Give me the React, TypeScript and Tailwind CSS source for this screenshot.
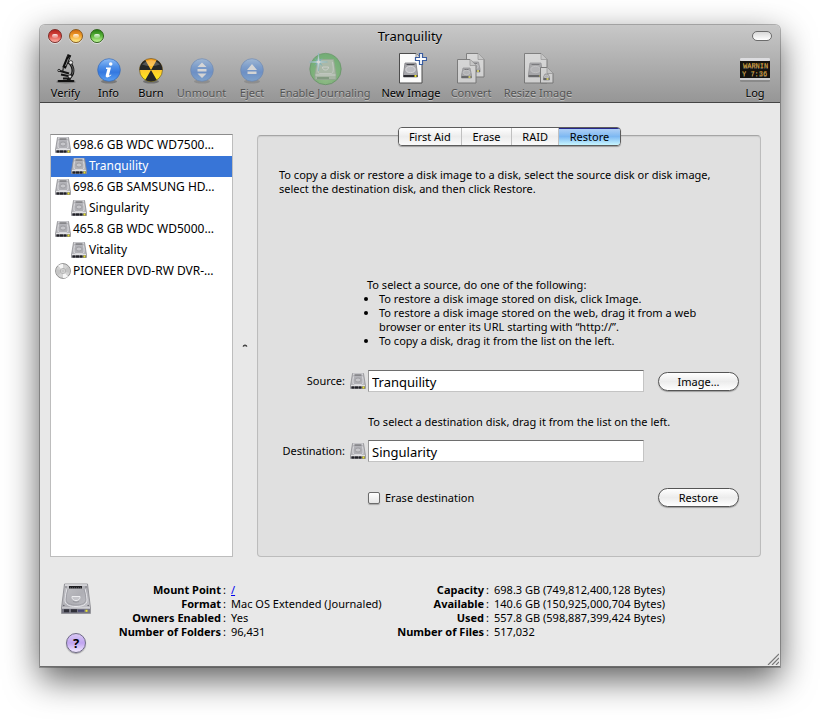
import React from 'react';

interface DiskItem {
  name: string;
  kind: 'disk' | 'volume' | 'optical';
  selected?: boolean;
}

interface InfoItem {
  label: string;
  value: string;
  href?: string;
}

interface ToolItem {
  label: string;
  width: string;
  icon: React.ReactNode;
  disabled?: boolean;
}

const DriveIcon = () => (
  <svg viewBox="0 0 30 32" className="h-8 w-[30px]" aria-hidden="true">
    <defs>
      <linearGradient id="driveTop" x1="0" y1="0" x2="1" y2="1">
        <stop offset="0" stopColor="#c4c4c8" />
        <stop offset="0.5" stopColor="#aeaeb4" />
        <stop offset="1" stopColor="#c9c9ce" />
      </linearGradient>
    </defs>
    <path d="M3.500 1h23L29.500 25v5.500H.5V25z" fill="url(#driveTop)" stroke="#85858b" strokeWidth="0.800" />
    <path d="M4 2h22" stroke="#f4f4f6" strokeWidth="1" />
    <path d="M6 6Q4 13 4 17c0 5 5 6.500 11 6.500S26 22 26 17q0-4-2-11" fill="none" stroke="#e6e6ea" strokeWidth="1" />
    <path d="M7 6Q5 12 5.200 16.500c0 4 4.800 5.500 9.800 5.500s9.800-1.500 9.800-5.500Q25 12 23 6" fill="none" stroke="#96969d" strokeWidth="0.700" />
    <path d="M11 13.500h8c.500 5.500-8.500 5.500-8 0z" fill="#c4c4c9" stroke="#f2f2f4" strokeWidth="0.900" />
    <path d="M12 18.500q3 1.500 6 0" fill="none" stroke="#84848b" strokeWidth="0.600" />
    <rect x="8" y="3" width="13" height="2.500" fill="#1d1d20" />
    <path d="M9 5h11" stroke="#88888e" strokeWidth="0.800" strokeDasharray="1 1" />
    <path d="M1 25.500h28v4.500H1z" fill="#767682" />
    <path d="M1 25h28" stroke="#ececef" strokeWidth="0.800" />
    <path d="M3 27.800h5M10 27.800h6" stroke="#2f2f38" strokeWidth="3" />
    <path d="M17 27.800h6" stroke="#4b4b76" strokeWidth="2" />
    <rect x="24.500" y="26.800" width="2" height="2" fill="#f0e82c" />
    <circle cx="5" cy="4" r="0.700" fill="#66666c" />
    <circle cx="25" cy="4" r="0.700" fill="#66666c" />
    <circle cx="2.800" cy="22.500" r="0.800" fill="#66666c" />
    <circle cx="27.200" cy="22.500" r="0.800" fill="#66666c" />
  </svg>
);

const SmallDriveIcon = ({ className }: { className: string }) => (
  <svg viewBox="0 0 16 16" className={className} aria-hidden="true">
    <path d="M2.500 .5h11l2 12.500v2.500H.5V13z" fill="#b9b9bd" stroke="#8e8e93" strokeWidth="0.800" />
    <path d="M3 1h10" stroke="#ededf0" strokeWidth="1" />
    <path d="M4.500 2h7" stroke="#56565b" strokeWidth="1" />
    <path d="M3.500 3.500Q2 11 4.500 11.500h7Q14 11 12.500 3.500" fill="#b0b0b5" stroke="#dedee1" strokeWidth="0.900" />
    <ellipse cx="8" cy="7" rx="3" ry="2" fill="#c6c6ca" stroke="#96969b" strokeWidth="0.800" />
    <path d="M1 12.500h14" stroke="#e2e2e4" />
    <path d="M1 14.500h14" stroke="#55555d" strokeWidth="2" />
    <path d="M2 14.500h2M5 14.500h3M9 14.500h2" stroke="#212126" strokeWidth="2" />
    <path d="M12.500 14.500h2" stroke="#eee42c" strokeWidth="2" />
  </svg>
);

const DiscIcon = () => (
  <svg viewBox="0 0 16 16" className="size-4 shrink-0" aria-hidden="true">
    <circle cx="8" cy="8" r="7.400" fill="#d3d3d3" stroke="#8f8f8f" />
    <path d="M8 8 3 2.500A7 7 0 0 1 8 1zM8 8l5 5.500A7 7 0 0 1 8 15z" fill="#f6f6f6" />
    <path d="M8 8 1.500 6A7 7 0 0 0 3 12.500zM8 8l6.500 2A7 7 0 0 0 13 3.500z" fill="#c4c4c4" />
    <circle cx="8" cy="8" r="2.600" fill="#e6e6e6" stroke="#a0a0a0" strokeWidth="0.700" />
    <circle cx="8" cy="8" r="1.100" fill="#fff" stroke="#777" strokeWidth="0.500" />
  </svg>
);

const MicroscopeIcon = () => (
  <svg viewBox="0 0 24 32" className="h-8 w-6" aria-hidden="true">
    <ellipse cx="12" cy="29" rx="10" ry="1.500" fill="#000" opacity="0.250" />
    <path d="M4.500 28h15" stroke="#111" strokeWidth="1.800" strokeLinecap="round" />
    <path d="M14 9c5.500 3 6.500 11 2.500 14.500l-2.500 4" fill="none" stroke="#161616" strokeWidth="3" />
    <path d="M15.500 10c4 4 4.500 8 2.500 11.500" fill="none" stroke="#888" strokeWidth="0.700" />
    <path d="m14.500 4-4.500 11" stroke="#0d0d0d" strokeWidth="3.800" />
    <path d="m14.500 5.500-3 7.500" stroke="#999" strokeWidth="0.900" />
    <path d="m13.200 2.200 3.600 1.400" stroke="#111" strokeWidth="2.600" />
    <path d="m9.500 15-1 3.500" stroke="#444" strokeWidth="1.600" />
    <path d="m4.500 17.500 10.500 3" stroke="#151515" strokeWidth="2" />
    <path d="m7 21.500 7 1.500M9 25.500h8" stroke="#151515" strokeWidth="2" />
    <circle cx="16.800" cy="9.500" r="1.900" fill="#ececec" stroke="#222" strokeWidth="0.800" />
    <circle cx="16" cy="23.500" r="1.700" fill="#ddd" stroke="#111" strokeWidth="0.800" />
    <circle cx="5" cy="17.500" r="1.200" fill="#bbb" stroke="#111" strokeWidth="0.800" />
  </svg>
);

const BlueOrb = ({ children }: { children: React.ReactNode }) => (
  <svg viewBox="0 0 24 26" className="mt-1 h-[26px] w-6" aria-hidden="true">
    <defs>
      <linearGradient id="blueOrb" x1="0" y1="0" x2="0" y2="1">
        <stop offset="0" stopColor="#8fbdf6" />
        <stop offset="0.350" stopColor="#4f90e8" />
        <stop offset="0.600" stopColor="#3478e0" />
        <stop offset="1" stopColor="#5ba1f3" />
      </linearGradient>
    </defs>
    <ellipse cx="12" cy="23.500" rx="8" ry="2" fill="#000" opacity="0.250" />
    <circle cx="12" cy="12" r="11.300" fill="url(#blueOrb)" stroke="#3568b4" strokeWidth="0.700" />
    {children}
  </svg>
);

const BurnIcon = () => (
  <svg viewBox="0 0 24 26" className="mt-1 h-[26px] w-6" aria-hidden="true">
    <defs>
      <linearGradient id="burnYellow" x1="0" y1="0" x2="0" y2="1">
        <stop offset="0" stopColor="#f49a19" />
        <stop offset="0.450" stopColor="#ffc32f" />
        <stop offset="1" stopColor="#fff21a" />
      </linearGradient>
    </defs>
    <ellipse cx="12" cy="23.500" rx="8" ry="2" fill="#000" opacity="0.300" />
    <circle cx="12" cy="12" r="11.500" fill="url(#burnYellow)" stroke="#5b4a20" strokeWidth="0.600" />
    <path d="M12 12 6.250 2.040A11.500 11.500 0 0 0 .5 12zM12 12l5.750-9.960A11.500 11.500 0 0 1 23.500 12zM12 12l-5.750 9.960a11.500 11.500 0 0 0 11.500 0z" fill="#262626" />
    <path d="M3 6.500Q12-2 21 6.500 12 9.500 3 6.500" fill="#fff" opacity="0.220" />
  </svg>
);

const JournalIcon = () => (
  <svg viewBox="0 0 34 34" className="size-[34px]" aria-hidden="true">
    <defs>
      <radialGradient id="journalGreen" cx="0.500" cy="0.800" r="0.800">
        <stop offset="0" stopColor="#7ed36b" />
        <stop offset="1" stopColor="#2fa535" />
      </radialGradient>
    </defs>
    <circle cx="17.500" cy="17" r="15.700" fill="url(#journalGreen)" stroke="#2c7f2c" strokeWidth="0.800" />
    <path d="M9.500 7.500h16L28 22v5.500H7V22z" fill="#a9c4a4" stroke="#7fa07b" strokeWidth="0.800" />
    <path d="M10.500 10q-2 11 1 11.500h12q3-.5 1-11.500" fill="none" stroke="#dce8da" strokeWidth="0.900" />
    <path d="M14.500 15h6c.500 4-6.500 4-6 0z" fill="none" stroke="#edf4eb" strokeWidth="0.900" />
    <path d="M7.500 23h20" stroke="#eef5ec" />
    <path d="M9 26h12" stroke="#5f8f5c" strokeWidth="2" />
    <path d="m6 5.500 4.500 3.800L15 5.500 11.700 10l3.300 4.500-4.500-3.800L6 14.500 9.300 10z" fill="#3cb2c6" />
    <path d="m10.500 1 .9 8.100 8.100.9-8.100.9-.9 8.100-.9-8.100-8.100-.9 8.100-.9z" fill="#f2ffff" stroke="#5cbccb" strokeWidth="0.500" />
    <circle cx="10.500" cy="10" r="1.600" fill="#fff" />
  </svg>
);

const Page = ({ x, y, w, h, drive }: { x: number; y: number; w: number; h: number; drive: number }) => (
  <g transform={`translate(${x} ${y})`}>
    <path d={`M.5 .5H${w - 6}L${w} 6.500V${h}H.5z`} fill="#fbfbfb" stroke="#4c4c4c" />
    <path d={`M${w - 6} .5V6.500H${w}`} fill="#dcdcdc" stroke="#777" strokeWidth="0.700" />
    <g transform={`translate(${(w - drive) / 2} ${h / 2 - drive / 2 + 2})`}>
      <path d={`M1.500 0H${drive - 1.5}L${drive} ${drive - 3}V${drive}H0V${drive - 3}z`} fill="#a6a6ab" stroke="#7d7d83" strokeWidth="0.800" />
      <path d={`M3 1.500H${drive - 3}`} stroke="#4a4a50" />
      <ellipse cx={drive / 2} cy={drive / 2 - 0.5} rx={drive / 3} ry={drive / 4.5} fill="#bdbdc2" stroke="#e2e2e4" strokeWidth="0.800" />
      <path d={`M0 ${drive - 1}H${drive}`} stroke="#2c2c31" strokeWidth="2" />
      <path d={`M${drive - 3} ${drive - 1}h2`} stroke="#f1e52c" strokeWidth="2" />
    </g>
  </g>
);

const NewImageIcon = () => (
  <svg viewBox="0 0 32 34" className="h-[34px] w-8" aria-hidden="true">
    <Page x={4} y={1} w={23} h={30} drive={14} />
    <path d="M24.500 1.500h3v4h4v3h-4v4h-3v-4h-4v-3h4z" fill="#fff" stroke="#3a5da0" strokeWidth="1.200" />
  </svg>
);

const ConvertIcon = () => (
  <svg viewBox="0 0 32 34" className="h-[34px] w-8" aria-hidden="true">
    <Page x={11} y={1} w={18} h={24} drive={10} />
    <Page x={2} y={7} w={19} h={24} drive={10} />
  </svg>
);

const ResizeIcon = () => (
  <svg viewBox="0 0 32 34" className="h-[34px] w-8" aria-hidden="true">
    <Page x={2} y={1} w={23} h={30} drive={14} />
    <Page x={18} y={15} w={13} h={16} drive={6} />
  </svg>
);

const LogIcon = () => (
  <svg viewBox="0 0 30 26" className="mt-1 h-[26px] w-[30px]" aria-hidden="true">
    <rect width="30" height="24" rx="1.500" fill="#8a8a8a" />
    <rect width="30" height="3" rx="1" fill="#dcdcdf" />
    <rect y="3" width="30" height="17" fill="#15130f" />
    <rect y="20" width="30" height="2" fill="#cfcfd2" />
    <g fill="#dba02f" fontFamily="Liberation Mono, monospace" fontSize="7">
      <text x="3" y="10">WARNIN</text>
      <text x="2" y="18">Y 7:36</text>
    </g>
  </svg>
);

const tools: ToolItem[] = [
  { label: 'Verify', width: 'w-[43px]', icon: <MicroscopeIcon /> },
  {
    label: 'Info',
    width: 'w-[43px]',
    icon: (
      <BlueOrb>
        <g fill="#fff">
          <circle cx="13.700" cy="6" r="1.800" />
          <path d="M9 9.500h5l-2 7.500q0 1 2-.5l.4.6q-2.600 2.700-4.900 2.200-1.200-.5-.7-2.300l1.600-6H9z" />
        </g>
      </BlueOrb>
    ),
  },
  { label: 'Burn', width: 'w-[42px]', icon: <BurnIcon /> },
  {
    label: 'Unmount',
    width: 'w-[59px]',
    disabled: true,
    icon: (
      <BlueOrb>
        <path d="m12 4.500 4.500 4.500h-9zM7.500 11h9v2.500h-9zM7.500 15.500h9L12 20z" fill="#fff" />
      </BlueOrb>
    ),
  },
  {
    label: 'Eject',
    width: 'w-[42px]',
    disabled: true,
    icon: (
      <BlueOrb>
        <path d="m12 6 5 6H7zM7.500 13.500h9V16h-9z" fill="#fff" />
      </BlueOrb>
    ),
  },
  { label: 'Enable Journaling', width: 'w-[104px]', disabled: true, icon: <JournalIcon /> },
  { label: 'New Image', width: 'w-[68px]', icon: <NewImageIcon /> },
  { label: 'Convert', width: 'w-[52px]', disabled: true, icon: <ConvertIcon /> },
  { label: 'Resize Image', width: 'w-[82px]', disabled: true, icon: <ResizeIcon /> },
];

const disks: DiskItem[] = [
  { name: '698.6 GB WDC WD7500…', kind: 'disk' },
  { name: 'Tranquility', kind: 'volume', selected: true },
  { name: '698.6 GB SAMSUNG HD…', kind: 'disk' },
  { name: 'Singularity', kind: 'volume' },
  { name: '465.8 GB WDC WD5000…', kind: 'disk' },
  { name: 'Vitality', kind: 'volume' },
  { name: 'PIONEER DVD-RW DVR-…', kind: 'optical' },
];

const volumeInfo: InfoItem[] = [
  { label: 'Mount Point', value: '/', href: '#root' },
  { label: 'Format', value: 'Mac OS Extended (Journaled)' },
  { label: 'Owners Enabled', value: 'Yes' },
  { label: 'Number of Folders', value: '96,431' },
];

const usageInfo: InfoItem[] = [
  { label: 'Capacity', value: '698.3 GB (749,812,400,128 Bytes)' },
  { label: 'Available', value: '140.6 GB (150,925,000,704 Bytes)' },
  { label: 'Used', value: '557.8 GB (598,887,399,424 Bytes)' },
  { label: 'Number of Files', value: '517,032' },
];

const tabs = ['First Aid', 'Erase', 'RAID', 'Restore'];

const ToolButton = ({ tool }: { tool: ToolItem }) => (
  <button
    disabled={tool.disabled}
    className={`flex flex-col items-center text-[11px] leading-[14px] whitespace-nowrap [text-shadow:0_1px_0_rgba(255,255,255,0.4)] ${tool.width}`}
  >
    <span className={`flex h-[34px] items-center justify-center ${tool.disabled ? 'opacity-50' : ''}`}>{tool.icon}</span>
    <span className={tool.disabled ? 'text-[#555]' : 'text-black'}>{tool.label}</span>
  </button>
);

const TrafficLight = ({ label, color }: { label: string; color: string }) => (
  <button
    aria-label={label}
    className={`size-[14px] rounded-full border shadow-[0_1px_0_rgba(255,255,255,0.5)] ${color}`}
  >
    <span className="mx-auto -mt-px block h-[4px] w-[6px] rounded-full bg-linear-to-b from-white/90 to-white/20" />
  </button>
);

const PushButton = ({ children }: { children: React.ReactNode }) => (
  <button className="h-[19px] w-[81px] justify-self-end rounded-full border border-[#555] bg-linear-to-b from-white via-[#ececec] to-white text-[11px] leading-[17px] shadow-[0_1px_1px_rgba(0,0,0,0.3)]">
    {children}
  </button>
);

const DiskField = ({ id, label, value }: { id: string; label: string; value: string }) => (
  <>
    <div className="flex items-center justify-end">
      <label htmlFor={id}>{label}</label>
      <SmallDriveIcon className="mr-[2px] ml-[5px] size-4" />
    </div>
    <input
      id={id}
      defaultValue={value}
      className="h-[22px] w-full min-w-0 border border-[#c4c4c4] border-t-[#6e6e6e] border-l-[#9a9a9a] bg-white px-[3px] pt-[2px] text-[13px] leading-[18px] outline-none"
    />
  </>
);

const InfoList = ({ items, className }: { items: InfoItem[]; className: string }) => (
  <dl className={className}>
    {items.map(item => (
      <React.Fragment key={item.label}>
        <dt className="text-right">
          <b className="font-bold">{item.label}</b>
          <span className="ml-[2px]">:</span>
        </dt>
        <dd className="whitespace-nowrap">
          {item.href ? <a href={item.href} className="text-[#0000ee] underline">{item.value}</a> : item.value}
        </dd>
      </React.Fragment>
    ))}
  </dl>
);

const Header = () => (
  <header className="rounded-t-[5px] border-b border-[#444] bg-linear-to-b from-[#c8c8c8] to-[#969696]">
    <div className="grid h-[22px] grid-cols-[1fr_auto_1fr] items-center px-2">
      <div className="flex gap-[7px]">
        <TrafficLight label="Close" color="border-[#7c2a26] bg-linear-to-b from-[#b3221e] via-[#dc4a42] to-[#ffb0a8]" />
        <TrafficLight label="Minimize" color="border-[#8a5a1c] bg-linear-to-b from-[#cf6a10] via-[#f5a52c] to-[#fff08a]" />
        <TrafficLight label="Zoom" color="border-[#2e6419] bg-linear-to-b from-[#277f14] via-[#5cb83c] to-[#c4f99a]" />
      </div>
      <h1 className="text-[13px] leading-[18px] [text-shadow:0_1px_0_rgba(255,255,255,0.4)]">Tranquility</h1>
      <button
        aria-label="Toggle toolbar"
        className="h-[10px] w-5 justify-self-end rounded-full border border-[#6b6b6b] bg-linear-to-b from-[#d8d8d8] to-white"
      />
    </div>
    <div className="flex px-1 pt-[5px] pb-[2px]">
      {tools.map(tool => (
        <ToolButton key={tool.label} tool={tool} />
      ))}
      <div className="ml-auto">
        <ToolButton tool={{ label: 'Log', width: 'w-[42px]', icon: <LogIcon /> }} />
      </div>
    </div>
  </header>
);

const DiskList = () => (
  <ul className="w-[183px] shrink-0 border border-[#bdbdbd] border-t-[#8c8c8c] bg-white">
    {disks.map(disk => (
      <li
        key={disk.name}
        className={`flex h-[21px] items-center gap-[2px] pb-[2px] text-[12px] leading-[16px] whitespace-nowrap ${
          disk.kind === 'volume' ? 'pl-5' : 'pl-1'
        } ${disk.selected ? 'bg-[#3875d7] text-white' : 'text-black'}`}
      >
        {disk.kind === 'optical' ? <DiscIcon /> : <SmallDriveIcon className="size-4 shrink-0" />}
        {disk.name}
      </li>
    ))}
  </ul>
);

const RestorePanel = () => (
  <section className="mt-px min-w-0 flex-1 rounded-[4px] border border-[#bcbcbc] border-t-[#a5a5a5] bg-[#e0e0e0] px-[21px] pb-[49px] shadow-[inset_0_1px_1px_rgba(0,0,0,0.08)]">
    <div role="tablist" className="mx-auto -mt-[9px] flex h-[19px] w-[223px] overflow-hidden rounded-[4px] border border-[#5c5c5c] shadow-[0_1px_1px_rgba(0,0,0,0.3)]">
      {tabs.map(tab => (
        <button
          key={tab}
          role="tab"
          aria-selected={tab === 'Restore'}
          className={`grow text-[11px] leading-[16px] ${
            tab === 'Restore'
              ? 'bg-linear-to-b from-[#b4d2f5] via-[#7db8f2] to-[#c8f6ff] shadow-[inset_0_1px_0_#26268a]'
              : 'border-r border-[#c0c0c0] bg-linear-to-b from-white via-[#ececec] to-[#fafafa]'
          }`}
        >
          {tab}
        </button>
      ))}
    </div>

    <p className="mt-[22px] max-w-[460px]">
      To copy a disk or restore a disk image to a disk, select the source disk or disk image, select the destination disk, and then click Restore.
    </p>

    <div className="mt-[82px] ml-[88px] max-w-[352px]">
      <p>To select a source, do one of the following:</p>
      <ul className="list-disc pl-3">
        <li>To restore a disk image stored on disk, click Image.</li>
        <li>To restore a disk image stored on the web, drag it from a web browser or enter its URL starting with “http://”.</li>
        <li>To copy a disk, drag it from the list on the left.</li>
      </ul>
    </div>

    <form className="mt-[22px] grid grid-cols-[89px_1fr_95px] items-center" onSubmit={e => e.preventDefault()}>
      <DiskField id="source" label="Source:" value="Tranquility" />
      <PushButton>Image…</PushButton>
      <p className="col-span-2 col-start-2 mt-[23px] mb-[11px]">
        To select a destination disk, drag it from the list on the left.
      </p>
      <DiskField id="destination" label="Destination:" value="Singularity" />
      <label className="col-start-2 row-start-4 mt-[26px] flex items-center gap-[5px]">
        <input
          type="checkbox"
          className="size-3 appearance-none rounded-[2px] border border-[#6b6b6b] bg-linear-to-b from-white to-[#e6e6e6] shadow-[0_1px_1px_rgba(0,0,0,0.25)]"
        />
        Erase destination
      </label>
      <div className="col-start-3 row-start-4 mt-[26px] grid">
        <PushButton>Restore</PushButton>
      </div>
    </form>
  </section>
);

const App: React.FC = () => {
  return (
    <div className="min-h-screen bg-white px-10 pt-[25px] pb-[54px] font-['Noto_Sans','Open_Sans',sans-serif] text-[11px] leading-[14px] text-black">
      <div className="rounded-t-[5px] bg-[#e8e8e8] shadow-[0_0_0_1px_rgba(0,0,0,0.25),0_12px_34px_rgba(0,0,0,0.65)]">
        <Header />

        <main className="flex pt-[31px] pr-[19px] pl-[10px]">
          <DiskList />
          <div className="flex w-6 items-center justify-center" role="separator">
            <svg viewBox="0 0 6 6" className="size-[6px]" aria-hidden="true">
              <path d="M1 3.500q2-3 4 0" fill="#888" stroke="#222" strokeWidth="1.200" />
            </svg>
          </div>
          <RestorePanel />
        </main>

        <footer className="flex pt-[26px] pl-[21px]">
          <div className="flex w-[30px] flex-col items-center gap-[18px] pb-[13px]">
            <DriveIcon />
            <button
              aria-label="Help"
              className="size-5 rounded-full border border-[#6f6a86] bg-linear-to-b from-[#d9c8f5] via-[#c0a4f0] to-[#f3eaff] text-[13px] leading-[18px] font-bold shadow-[0_1px_1px_rgba(0,0,0,0.3)]"
            >
              ?
            </button>
          </div>
          <InfoList items={volumeInfo} className="grid w-[259px] grid-cols-[135px_1fr] content-start gap-x-[5px]" />
          <InfoList items={usageInfo} className="grid flex-1 grid-cols-[139px_1fr] content-start gap-x-[5px]" />
          <svg viewBox="0 0 12 12" className="mr-[1px] mb-[1px] size-3 self-end" aria-hidden="true">
            <path d="M1 12 12 1M5 12l7-7M9 12l3-3" stroke="#777" strokeWidth="1.200" />
          </svg>
        </footer>
        <div className="h-px bg-[#6d6d6d]" />
      </div>
    </div>
  );
};

export default App;
